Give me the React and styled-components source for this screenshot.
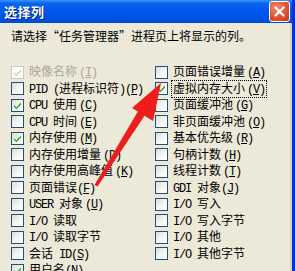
import styled, { createGlobalStyle } from "styled-components";

const GlobalStyle = createGlobalStyle`
  html, body { margin: 0; padding: 0; background: #ece9d8; }
  body { width: 295px; height: 271px; overflow: hidden; }
`;

const Window = styled.div`
  position: relative;
  width: 295px;
  height: 271px;
  box-sizing: border-box;
  background: #ece9d8;
  border-right: 3px solid #0831d9;
  box-shadow: inset -2px 0 0 #d8d2bd;
  overflow: hidden;
  font-family: "Noto Sans CJK SC", sans-serif;
  font-size: 12px;
  color: #000;
`;

const TitleBar = styled.div`
  display: flex;
  align-items: center;
  justify-content: space-between;
  height: 23px;
  padding: 0 2px 0 4px;
  background: linear-gradient(
    180deg,
    #3d95ff 0,
    #0a66f0 3px,
    #0058ee 45%,
    #0054e3 75%,
    #004ad6 100%
  );
`;

const Title = styled.span`
  font-weight: 700;
  font-size: 13px;
  color: #fff;
  text-shadow: 1px 1px 0 #0a1f7a;
  letter-spacing: 0.5px;
`;

const CloseButton = styled.div`
  display: flex;
  align-items: center;
  justify-content: center;
  width: 21px;
  height: 21px;
  box-sizing: border-box;
  border: 1px solid #fff;
  border-radius: 3px;
  background: radial-gradient(circle at 35% 30%, #f08a6c 0, #e0532f 55%, #c43a16 100%);
`;

const Body = styled.div`
  padding: 5px 0 0 11px;
`;

const Intro = styled.div`
  line-height: 16px;
  height: 16px;
`;

const Columns = styled.div`
  display: grid;
  grid-template-columns: 144px 1fr;
  margin-top: 20px;
`;

const Column = styled.div`
  display: flex;
  flex-direction: column;
`;

const Row = styled.div`
  display: flex;
  align-items: center;
  gap: 3px;
  height: 16.5px;
  white-space: nowrap;
  color: ${(p) => (p.disabled ? "#aca899" : "#000")};
`;

const Box = styled.span`
  display: flex;
  align-items: center;
  justify-content: center;
  flex: none;
  width: 13px;
  height: 13px;
  box-sizing: border-box;
  border: 1px solid ${(p) => (p.disabled ? "#cac8bb" : "#1c5180")};
  background: ${(p) =>
    p.disabled
      ? "#fff"
      : "linear-gradient(135deg, #dcdcd7 0, #f4f4f0 50%, #fff 100%)"};
`;

const Label = styled.span`
  line-height: 14px;
  padding: 0 1px;
  border: 1px dotted ${(p) => (p.focus ? "#000" : "transparent")};
`;

const Latin = styled.span`
  font-family: "Liberation Mono", monospace;
  letter-spacing: -1.2px;
`;

const Accel = styled(Latin)`
  margin-left: 2px;
`;

const Arrow = styled.svg`
  position: absolute;
  left: 0;
  top: 0;
  pointer-events: none;
`;

const Check = ({ disabled }) => (
  <svg width="9" height="9" viewBox="0 0 9 9">
    <path
      d="M1 4 L3.3 6.5 L8 1.6 L8 3.4 L3.3 8.3 L1 5.8 Z"
      fill={disabled ? "#cac8bb" : "#21a121"}
    />
  </svg>
);

// ASCII runs are set in a narrow monospace, like the SimSun half-width glyphs
const Mixed = ({ text }) =>
  text
    .split(/([\x20-\x7e]+)/)
    .filter(Boolean)
    .map((part, i) =>
      /^[\x20-\x7e]+$/.test(part) ? <Latin key={i}>{part}</Latin> : part
    );

const Item = ({ text, k, gap, checked, disabled, focus }) => (
  <Row disabled={disabled}>
    <Box disabled={disabled}>{checked && <Check disabled={disabled} />}</Box>
    <Label focus={focus}>
      <Mixed text={text} />
      {k &&
        (gap ? (
          <Accel>
            (<u>{k}</u>)
          </Accel>
        ) : (
          <Latin>
            (<u>{k}</u>)
          </Latin>
        ))}
    </Label>
  </Row>
);

const left = [
  { text: "映像名称", k: "I", gap: true, checked: true, disabled: true },
  { text: "PID (进程标识符)", k: "P" },
  { text: "CPU 使用", k: "C", gap: true, checked: true },
  { text: "CPU 时间", k: "E", gap: true },
  { text: "内存使用", k: "M", gap: true, checked: true },
  { text: "内存使用增量", k: "D", gap: true },
  { text: "内存使用高峰值", k: "K", gap: true },
  { text: "页面错误", k: "F" },
  { text: "USER 对象", k: "U", gap: true },
  { text: "I/O 读取" },
  { text: "I/O 读取字节" },
  { text: "会话 ID", k: "S" },
  { text: "用户名", k: "N", checked: true },
];

const right = [
  { text: "页面错误增量", k: "A", gap: true },
  { text: "虚拟内存大小", k: "V", gap: true, checked: true, focus: true },
  { text: "页面缓冲池", k: "G", gap: true },
  { text: "非页面缓冲池", k: "O", gap: true },
  { text: "基本优先级", k: "R", gap: true },
  { text: "句柄计数", k: "H", gap: true },
  { text: "线程计数", k: "T", gap: true },
  { text: "GDI 对象", k: "J" },
  { text: "I/O 写入" },
  { text: "I/O 写入字节" },
  { text: "I/O 其他" },
  { text: "I/O 其他字节" },
];

export default function App() {
  return (
    <>
      <GlobalStyle />
      <Window>
        <TitleBar>
          <Title>选择列</Title>
          <CloseButton>
            <svg width="11" height="11" viewBox="0 0 11 11">
              <path
                d="M1.5 1.5 L9.5 9.5 M9.5 1.5 L1.5 9.5"
                stroke="#fff"
                strokeWidth="2.2"
                strokeLinecap="round"
              />
            </svg>
          </CloseButton>
        </TitleBar>
        <Body>
          <Intro>请选择“任务管理器”进程页上将显示的列。</Intro>
          <Columns>
            <Column>
              {left.map((it) => (
                <Item key={it.text} {...it} />
              ))}
            </Column>
            <Column>
              {right.map((it) => (
                <Item key={it.text} {...it} />
              ))}
            </Column>
          </Columns>
        </Body>
        <Arrow width="295" height="271" viewBox="0 0 295 271">
          <path d="M94.5 185 L97.5 186.5 L147 112 L140 108 Z" fill="#ee1c1c" />
          <path d="M161 83 L153 121 L132 108 Z" fill="#ee1c1c" />
        </Arrow>
      </Window>
    </>
  );
}
